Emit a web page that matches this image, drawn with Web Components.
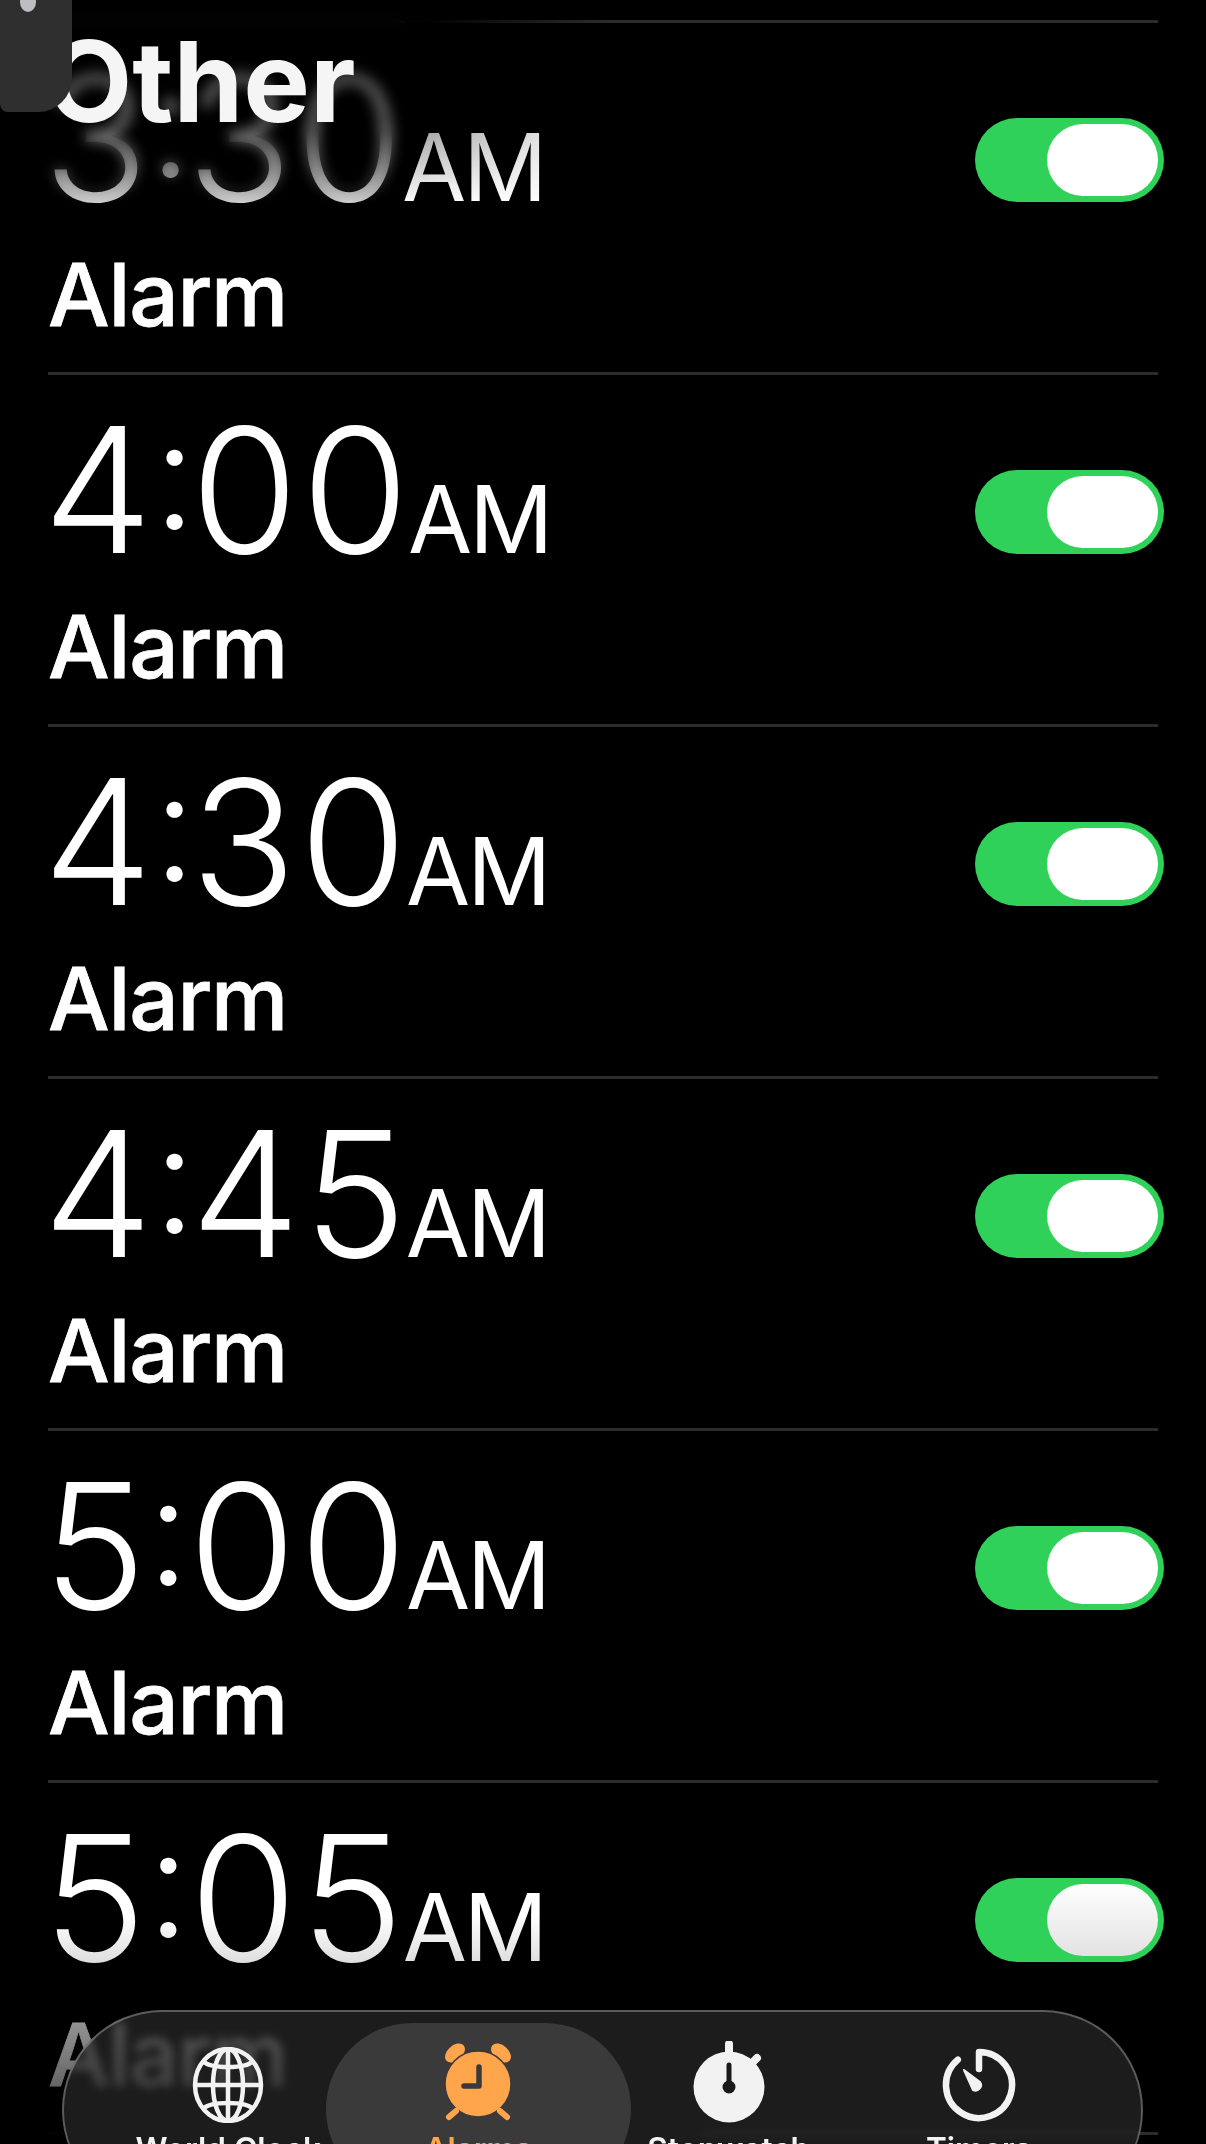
<!DOCTYPE html>
<html>
<head>
<meta charset="utf-8">
<title>Alarms</title>
<style>
html, body { margin: 0; background: #000; }
body { font-family: Inter, "Liberation Sans", sans-serif; color: #fff; }
</style>
</head>
<body>
<clock-app>
  <clock-header slot="header">Other</clock-header>
  <alarm-row time="3:30"></alarm-row>
  <alarm-row time="4:00"></alarm-row>
  <alarm-row time="4:30"></alarm-row>
  <alarm-row time="4:45"></alarm-row>
  <alarm-row time="5:00" style="--hour-gap: 4px"></alarm-row>
  <alarm-row time="5:05" style="--hour-gap: 5px" fading></alarm-row>
  <alarm-row time="5:10"></alarm-row>
  <tab-bar slot="tabs">
    <tab-item label="World Clock">
      <svg viewBox="0 0 76 76" width="76" height="76" fill="none" stroke="#f2f2f2" stroke-width="4.5">
        <ellipse cx="38" cy="38" rx="33" ry="36"/>
        <ellipse cx="38" cy="38" rx="15" ry="36"/>
        <path d="M38 2V74M5 38H71"/>
        <path d="M13 14C20 22 56 22 63 14M13 62C20 54 56 54 63 62"/>
      </svg>
    </tab-item>
    <tab-item label="Alarms" active>
      <svg viewBox="0 0 76 82" width="76" height="82">
        <g fill="#ffa64d">
          <ellipse cx="15" cy="12" rx="11.5" ry="7.5" transform="rotate(-42 15 12)"/>
          <ellipse cx="61" cy="12" rx="11.5" ry="7.5" transform="rotate(42 61 12)"/>
        </g>
        <circle cx="38" cy="43" r="33" fill="#ffa64d" stroke="#3a3a3a" stroke-width="1.5"/>
        <path d="M16 70L9 76M60 70L67 76" stroke="#ffa64d" stroke-width="6" stroke-linecap="round"/>
        <path d="M39 26V45H24" fill="none" stroke="#3a3a3a" stroke-width="5.5" stroke-linecap="round" stroke-linejoin="round"/>
      </svg>
    </tab-item>
    <tab-item label="Stopwatch">
      <svg viewBox="0 0 76 82" width="76" height="82">
        <circle cx="38" cy="46" r="35.5" fill="#f2f2f2"/>
        <path d="M38 3V14M66 17L61 22" stroke="#f2f2f2" stroke-width="8" stroke-linecap="round"/>
        <path d="M38 24V46" stroke="#1a1a1a" stroke-width="5" stroke-linecap="round"/>
        <circle cx="38" cy="46" r="6.5" fill="#1a1a1a"/>
      </svg>
    </tab-item>
    <tab-item label="Timers">
      <svg viewBox="0 0 76 76" width="76" height="76" fill="none">
        <path d="M38 22V5A33 33 0 1 1 16.8 12.7" stroke="#f2f2f2" stroke-width="6.5" stroke-linecap="round" stroke-linejoin="round"/>
        <path d="M23 23L39 35A5.5 5.5 0 0 1 32 43Z" fill="#f2f2f2" stroke="#f2f2f2" stroke-width="2" stroke-linejoin="round"/>
      </svg>
    </tab-item>
  </tab-bar>
</clock-app>

<script>
class ClockApp extends HTMLElement {
    constructor() {
        super();
        this.attachShadow({ mode: 'open' });
        this.shadowRoot.innerHTML = `
            <style>
                :host {
                    display: block;
                    position: relative;
                    width: 1206px;
                    height: 2144px;
                    overflow: hidden;
                    background: #000;
                }
                .list {
                    display: flex;
                    flex-direction: column;
                    padding-top: 20px;
                }
                .top-blur {
                    position: absolute;
                    left: 0;
                    top: 0;
                    width: 405px;
                    height: 215px;
                    backdrop-filter: blur(7px);
                    mask-image: linear-gradient(to bottom, #000 0, #000 130px, transparent 205px);
                }
                .top-dim {
                    position: absolute;
                    left: 0;
                    top: 0;
                    width: 405px;
                    height: 215px;
                    background: linear-gradient(to bottom, rgba(0,0,0,.7) 0, rgba(0,0,0,.7) 30px, rgba(0,0,0,.6) 120px, rgba(0,0,0,.2) 200px, transparent 215px);
                }
                .top-dim-side {
                    position: absolute;
                    left: 405px;
                    top: 0;
                    width: 200px;
                    height: 215px;
                    background: linear-gradient(to bottom, rgba(0,0,0,.96) 0, rgba(0,0,0,.96) 30px, rgba(0,0,0,.35) 130px, transparent 205px);
                    mask-image: linear-gradient(to right, #000 10%, transparent 100%);
                }
                .bottom-fade {
                    position: absolute;
                    left: 0;
                    bottom: 0;
                    width: 700px;
                    height: 280px;
                    background: linear-gradient(to bottom, transparent 50px, rgba(0,0,0,.12) 96px, rgba(0,0,0,.42) 156px, rgba(0,0,0,.6) 221px, #000 280px);
                }
                .back {
                    position: absolute;
                    left: 0;
                    top: 0;
                    width: 72px;
                    height: 112px;
                    background: #2f2f2f;
                    border-radius: 0 0 34px 8px;
                }
                .back::after {
                    content: "";
                    position: absolute;
                    left: 20px;
                    top: -8px;
                    width: 16px;
                    height: 20px;
                    border-radius: 50%;
                    background: #bdbdc2;
                }
            </style>
            <div class="list"><slot></slot></div>
            <div class="top-blur"></div>
            <div class="top-dim"></div>
            <div class="top-dim-side"></div>
            <div class="bottom-fade"></div>
            <slot name="header"></slot>
            <div class="back"></div>
            <slot name="tabs"></slot>
        `;
    }
}

class ClockHeader extends HTMLElement {
    constructor() {
        super();
        this.attachShadow({ mode: 'open' });
        this.shadowRoot.innerHTML = `
            <style>
                :host {
                    display: block;
                    position: absolute;
                    left: 46px;
                    top: 16px;
                    font-size: 112px;
                    line-height: 130px;
                    font-weight: 700;
                    color: #f5f5f5;
                }
            </style>
            <slot></slot>
        `;
    }
}

class AlarmRow extends HTMLElement {
    constructor() {
        super();
        this.attachShadow({ mode: 'open' });
        this.shadowRoot.innerHTML = `
            <style>
                :host {
                    display: flex;
                    align-items: flex-start;
                    justify-content: space-between;
                    flex: none;
                    box-sizing: border-box;
                    height: 352px;
                    margin: 0 48px;
                    border-top: 3px solid #2c2c2e;
                }
                .text {
                    display: flex;
                    flex-direction: column;
                    margin-left: -5px;
                }
                .when {
                    display: flex;
                    align-items: baseline;
                    height: 180px;
                    line-height: 180px;
                    margin-top: 25px;
                }
                .time {
                    font-size: 174px;
                    font-weight: 300;
                    letter-spacing: 3.5px;
                }
                .colon {
                    font-size: 153px;
                    font-feature-settings: "case";
                    vertical-align: 8px;
                    margin: 0 -9px 0 -3px;
                }
                .minute { margin-left: var(--hour-gap, 0); }
                .period {
                    font-size: 93px;
                    font-weight: 400;
                    margin-left: -4.5px;
                    letter-spacing: -3px;
                }
                .label {
                    font-size: 87px;
                    font-weight: 500;
                    -webkit-text-stroke: .8px #fff;
                    line-height: 100px;
                    letter-spacing: -1.2px;
                    margin-top: 17px;
                    margin-left: 5px;
                }
                alarm-toggle { margin-right: -6px; margin-top: 95px; }
            </style>
            <div class="text">
                <div class="when"><span class="time"><span class="hour"></span><span class="colon">:</span><span class="minute"></span></span><span class="period">AM</span></div>
                <div class="label">Alarm</div>
            </div>
            <alarm-toggle></alarm-toggle>
        `;
    }

    connectedCallback() {
        const [hour, minute] = this.getAttribute('time').split(':');
        this.shadowRoot.querySelector('.hour').textContent = hour;
        this.shadowRoot.querySelector('.minute').textContent = minute;
        if (this.hasAttribute('fading')) {
            this.shadowRoot.querySelector('alarm-toggle').setAttribute('fading', '');
        }
    }
}

class AlarmToggle extends HTMLElement {
    constructor() {
        super();
        this.attachShadow({ mode: 'open' });
        this.shadowRoot.innerHTML = `
            <style>
                :host {
                    display: flex;
                    justify-content: flex-end;
                    align-items: center;
                    box-sizing: border-box;
                    width: 189px;
                    height: 84px;
                    padding: 0 6px;
                    border-radius: 42px;
                    background: #30d158;
                }
                .knob {
                    width: 111px;
                    height: 72px;
                    border-radius: 36px;
                    background: #fff;
                }
                :host([fading]) .knob { background: linear-gradient(#fff, #e2e2e2); }
            </style>
            <div class="knob"></div>
        `;
    }
}

class TabBar extends HTMLElement {
    constructor() {
        super();
        this.attachShadow({ mode: 'open' });
        this.shadowRoot.innerHTML = `
            <style>
                :host {
                    display: grid;
                    grid-template-columns: repeat(4, 1fr);
                    box-sizing: border-box;
                    position: absolute;
                    left: 62px;
                    top: 2010px;
                    width: 1081px;
                    height: 200px;
                    padding: 11px 37px 13px 39px;
                    border-radius: 100px;
                    border: 2px solid rgba(255,255,255,.28);
                    border-bottom: 0;
                    background: rgba(45,45,45,.62);
                    backdrop-filter: blur(5px);
                }
            </style>
            <slot></slot>
        `;
    }
}

class TabItem extends HTMLElement {
    constructor() {
        super();
        this.attachShadow({ mode: 'open' });
        this.shadowRoot.innerHTML = `
            <style>
                :host {
                    display: flex;
                    flex-direction: column;
                    align-items: center;
                    position: relative;
                    color: #f2f2f2;
                    font-size: 31.5px;
                    font-weight: 600;
                }
                :host([active]) { color: #ffa64d; }
                :host([active])::before {
                    content: "";
                    position: absolute;
                    inset: 0 -27.5px;
                    height: 172px;
                    border-radius: 86px;
                    background: #3a3a3a;
                }
                .icon {
                    display: flex;
                    align-items: flex-end;
                    justify-content: center;
                    height: 83px;
                    margin-top: 17px;
                    position: relative;
                }
                .label {
                    position: relative;
                    line-height: 38px;
                    margin-top: 7px;
                    white-space: nowrap;
                }
            </style>
            <div class="icon"><slot></slot></div>
            <div class="label"></div>
        `;
    }

    connectedCallback() {
        this.shadowRoot.querySelector('.label').textContent = this.getAttribute('label');
    }
}

customElements.define('clock-app', ClockApp);
customElements.define('clock-header', ClockHeader);
customElements.define('alarm-row', AlarmRow);
customElements.define('alarm-toggle', AlarmToggle);
customElements.define('tab-bar', TabBar);
customElements.define('tab-item', TabItem);
</script>
</body>
</html>
